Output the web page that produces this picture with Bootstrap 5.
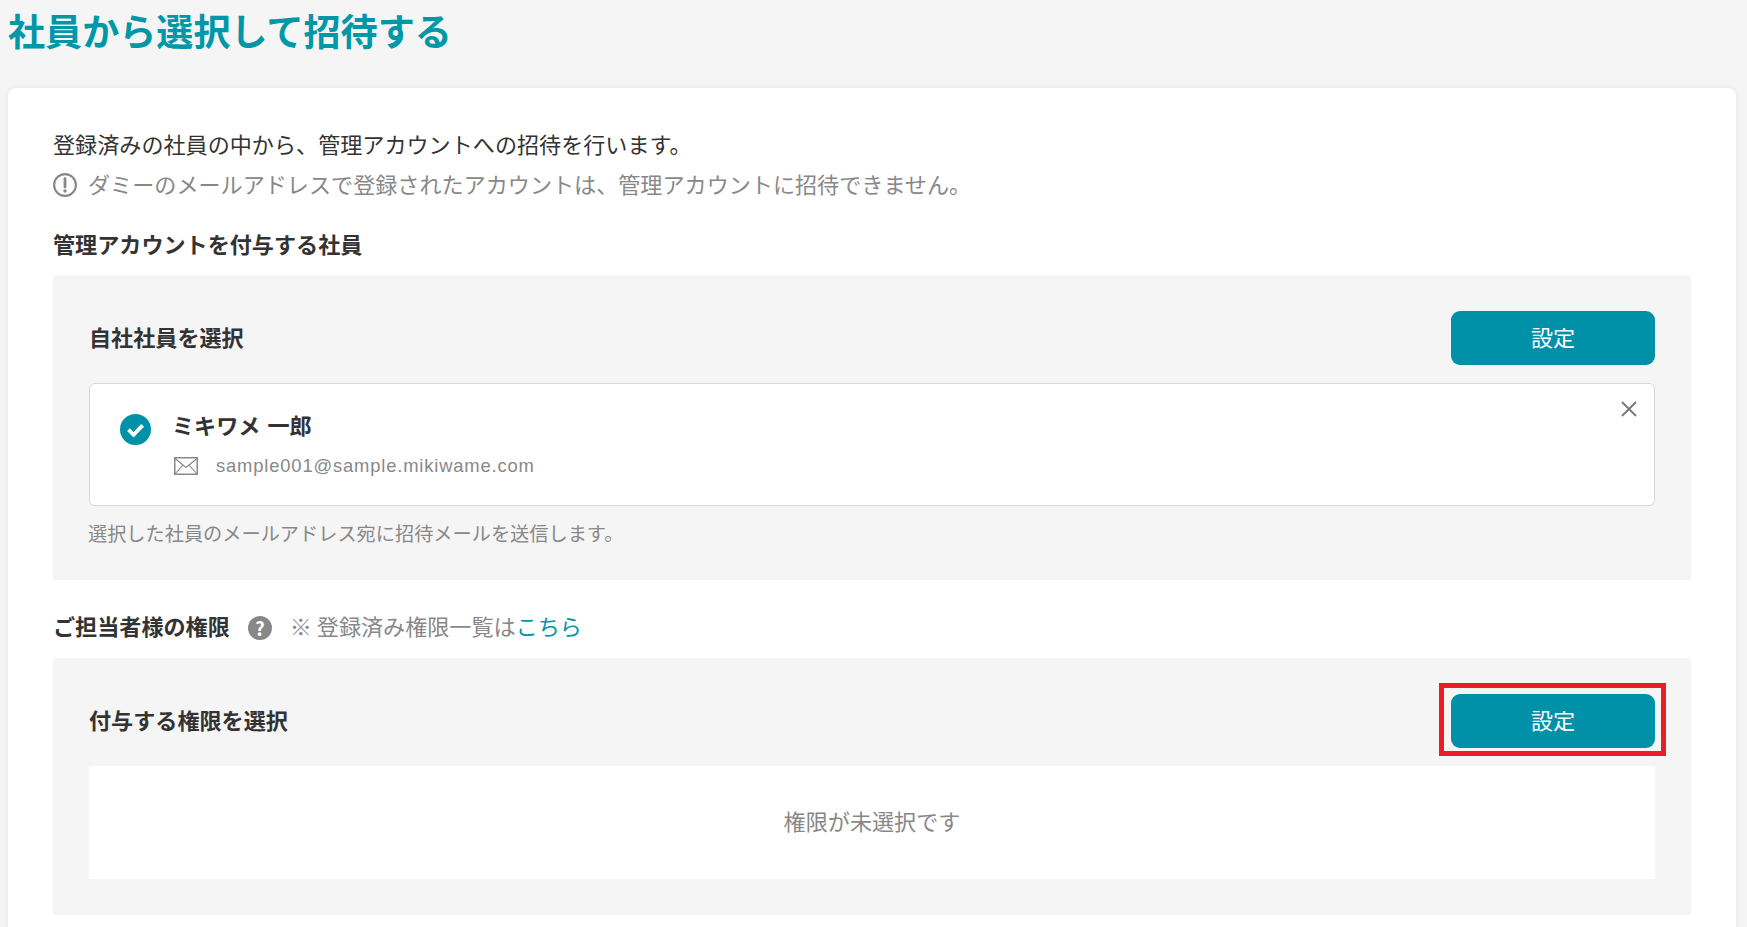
<!DOCTYPE html>
<html lang="ja">
<head>
<meta charset="utf-8">
<title>社員から選択して招待する</title>
<link href="https://cdn.jsdelivr.net/npm/bootstrap@5.3.0/dist/css/bootstrap.min.css" rel="stylesheet">
<style>
html,body{height:927px;overflow:hidden}
body{background:#f5f5f5;color:#333;font-family:"Noto Sans CJK JP","Noto Sans",sans-serif;font-size:22.1px}
.page-title{color:#0097a9;font-size:37.1px;font-weight:700;line-height:60px;height:88px;margin:0;padding-left:8px}
.sheet{margin:0 11px 0 8px;border:0;border-radius:8px;background:#fff;box-shadow:0 0 6px rgba(0,0,0,.08);padding:36px 45px 45px}
.line-40{line-height:37px;height:40px}
.line-first{height:41px;line-height:39px}
.muted-text{color:#888}
.gap-icon{gap:11px}
.lift-text{padding-bottom:3px}
.sec-head{font-weight:700;line-height:37px;height:40px;margin:20px 0 10px}
.sec-head-2{margin:27px 0 11px}
.panel-gray{background:#f5f5f5;padding:36px}
.panel-first{padding-bottom:32px}
.panel-row{height:54px;font-weight:700}
.btn-teal{width:204px;height:54px;background:#0090a8;color:#fff;border:0;border-radius:9px;font-size:22.1px;line-height:51px;padding:0 0 3px}
.btn-teal:hover{background:#0090a8;color:#fff}
.person-box{margin-top:18px;height:123px;background:#fff;border:1.5px solid #d8d8d8;border-radius:6px;padding:0 0 0 30px}
.person-name{font-weight:700;line-height:30px;margin-top:25px;word-spacing:2px}
.person-mail{color:#888;font-family:"Liberation Sans",sans-serif;font-size:18.4px;letter-spacing:.83px;line-height:24px;margin:15px 0 0 2px}
.ic-check{margin-top:30px;margin-right:21px;flex:none}
.ic-close{position:absolute;top:17px;right:17px}
.ic-mail{margin-right:18px}
.note-text{color:#888;font-size:19.2px;line-height:30px;margin:12px 0 0 -1px}
.ic-q{width:24px;height:24px;border-radius:50%;background:#888;color:#fff;font-size:19px;font-weight:700;line-height:24px;text-align:center;flex:none;margin:2px 18px 0 18px}
.perm-note{color:#888;font-weight:400}
.perm-note a{color:#0097a9;text-decoration:none}
.empty-box{margin-top:18px;height:113px;background:#fff;color:#888;display:flex;align-items:center;justify-content:center;padding-bottom:3px}
.mark-red{position:absolute;top:-11px;left:-12px;right:-11px;bottom:-8px;border:5px solid #ed1c24;pointer-events:none}
</style>
</head>
<body>
<h1 class="page-title">社員から選択して招待する</h1>
<div class="card sheet">
  <div class="line-40 line-first">登録済みの社員の中から、管理アカウントへの招待を行います。</div>
  <div class="line-40 muted-text d-flex align-items-center gap-icon">
    <svg width="24" height="24" viewBox="0 0 24 24" fill="none"><circle cx="12" cy="12" r="10.9" stroke="#888" stroke-width="2.1"/><path d="M12 5.6v8.4" stroke="#888" stroke-width="2.8" stroke-linecap="round"/><circle cx="12" cy="18" r="1.7" fill="#888"/></svg>
    <span class="lift-text">ダミーのメールアドレスで登録されたアカウントは、管理アカウントに招待できません。</span>
  </div>
  <div class="sec-head">管理アカウントを付与する社員</div>
  <div class="panel-gray panel-first">
    <div class="panel-row d-flex justify-content-between align-items-center">
      <span class="lift-text">自社社員を選択</span>
      <button type="button" class="btn btn-teal">設定</button>
    </div>
    <div class="person-box d-flex position-relative">
      <svg class="ic-check" width="31" height="31" viewBox="0 0 30 30"><circle cx="15" cy="15" r="15" fill="#0090a8"/><path d="M8.2 15.2l4.9 4.9 8.8-9" fill="none" stroke="#fff" stroke-width="3.8"/></svg>
      <div>
        <div class="person-name">ミキワメ 一郎</div>
        <div class="person-mail d-flex align-items-center">
          <svg class="ic-mail" width="24" height="18" viewBox="0 0 24 18" fill="none"><rect x=".75" y=".75" width="22.5" height="16.5" stroke="#888" stroke-width="1.5"/><path d="M1 1.5l11 9 11-9M1 17l8-9M23 17l-8-9" stroke="#888" stroke-width="1.1"/></svg>
          <span>sample001@sample.mikiwame.com</span>
        </div>
      </div>
      <svg class="ic-close" width="16" height="16" viewBox="0 0 16 16"><path d="M1 1l14 14M15 1L1 15" stroke="#777" stroke-width="1.8"/></svg>
    </div>
    <div class="note-text">選択した社員のメールアドレス宛に招待メールを送信します。</div>
  </div>
  <div class="sec-head sec-head-2 d-flex align-items-center">
    <span class="lift-text">ご担当者様の権限</span>
    <span class="ic-q">?</span>
    <span class="perm-note lift-text">※ 登録済み権限一覧は<a href="#">こちら</a></span>
  </div>
  <div class="panel-gray">
    <div class="panel-row d-flex justify-content-between align-items-center">
      <span class="lift-text">付与する権限を選択</span>
      <span class="position-relative d-inline-block">
        <button type="button" class="btn btn-teal d-block">設定</button>
        <span class="mark-red"></span>
      </span>
    </div>
    <div class="empty-box">権限が未選択です</div>
  </div>
</div>
<script src="https://cdn.jsdelivr.net/npm/bootstrap@5.3.0/dist/js/bootstrap.bundle.min.js"></script>
</body>
</html>
